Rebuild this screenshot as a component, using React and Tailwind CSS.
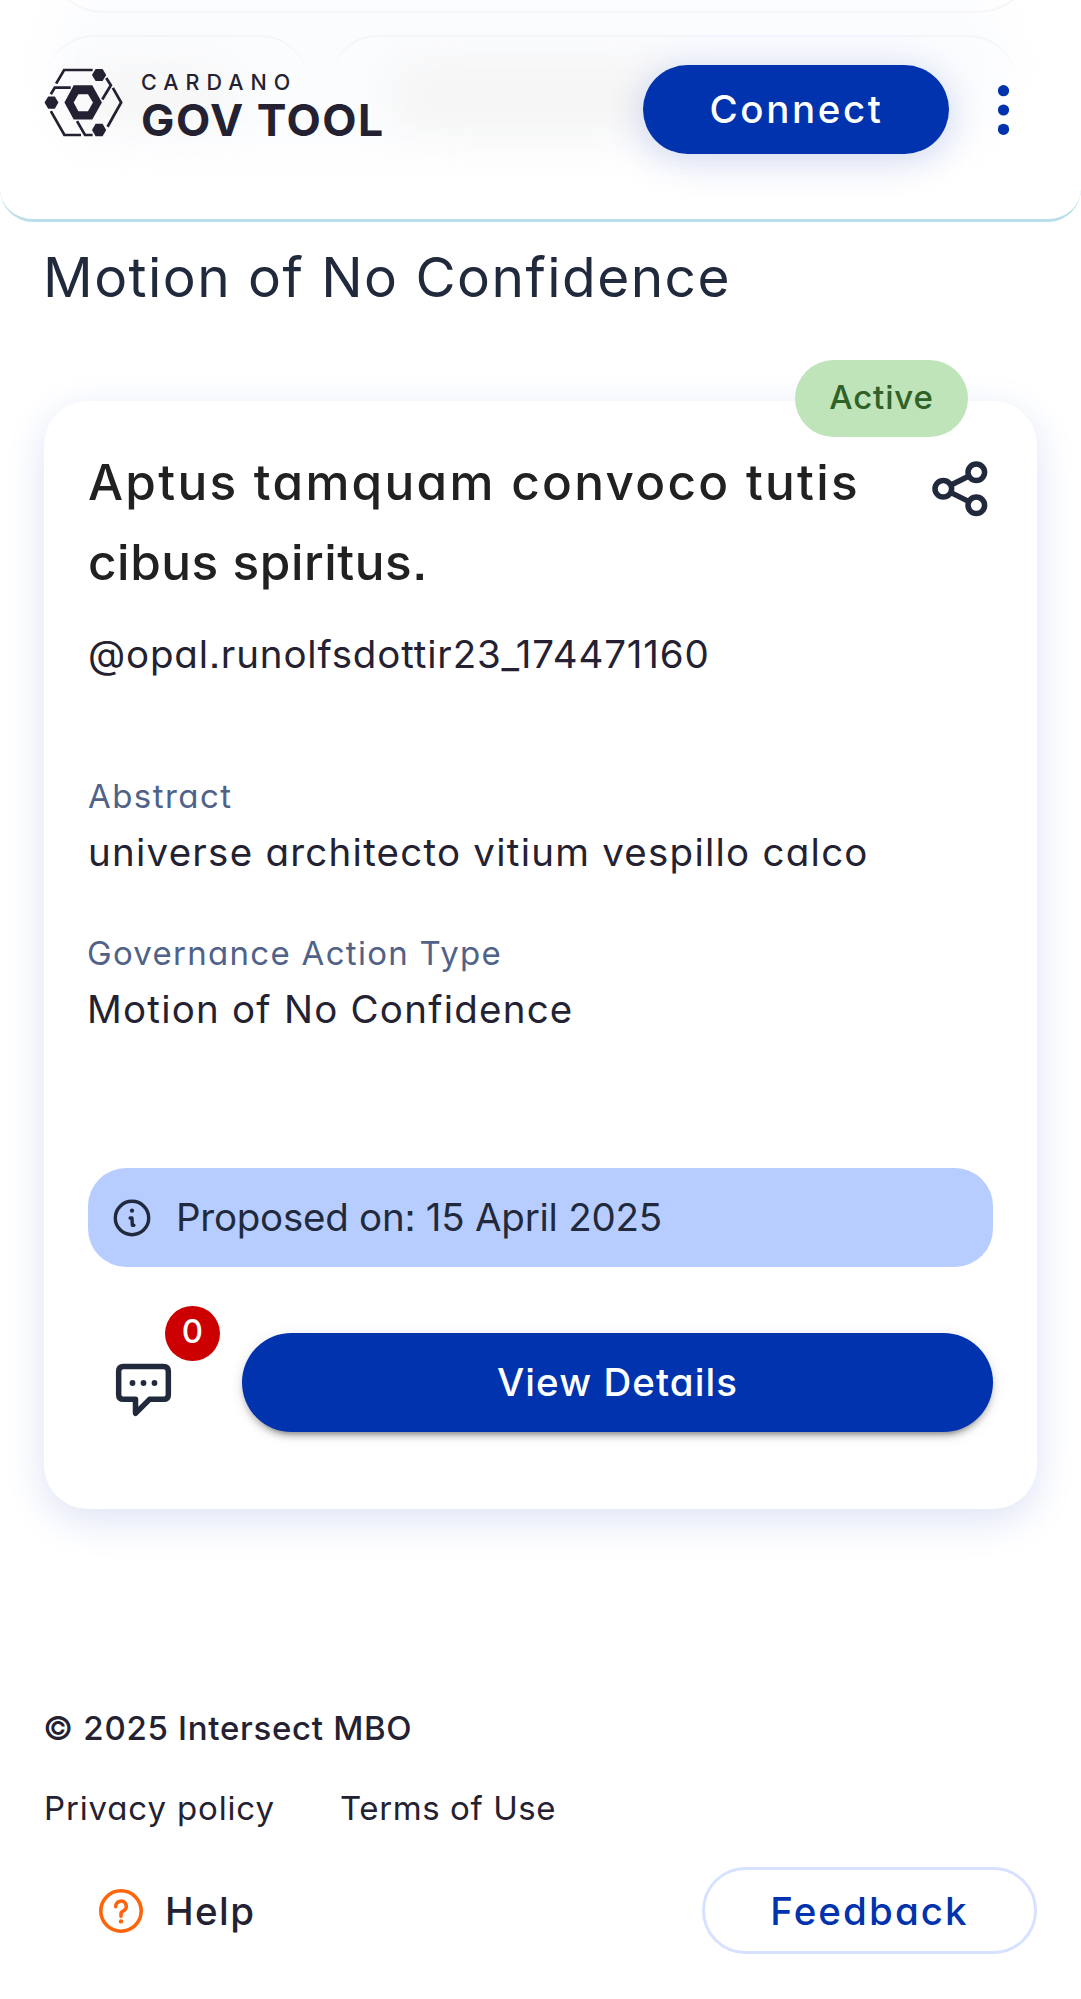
function LogoMark() {
  return (
    <svg viewBox="42 54 237 208" className="h-[69px] w-[79px] shrink-0" fill="none" stroke="#242232" strokeWidth="8.2">
      <path d="M78 101 102 60H188M62 133 74 113H122M229 84 243 106 217 149M249 114 274 158 233 231M62 184 103 256H153M141 214 165 256H188" />
      <g fill="#242232" stroke="none">
        <path d="M186 75 197 57H218L229 75 218 93H197Z" />
        <path d="M43 158 54 140H74L85 158 74 177H54Z" />
        <path d="M186 241 197 222H218L229 241 218 260H197Z" />
        <path fillRule="evenodd" d="M103 158 131 106H187L216 158 187 209H131ZM131 158 145 133H174L189 158 174 184H145Z" />
      </g>
    </svg>
  );
}

function Header() {
  return (
    <header className="relative flex h-[222px] items-start overflow-hidden rounded-b-[33px] border-b-3 border-[#b9dfea] bg-white pl-[44px] pr-[72px]">
      <div className="absolute left-[50px] top-[-20px] h-[170px] w-[960px] rounded-[70px] bg-[#fbfcfe] blur-[22px]" />
      <div className="absolute left-[75px] top-[65px] h-[60px] w-[160px] rounded-full bg-[#f6f6f6] blur-[20px]" />
      <div className="absolute left-[390px] top-[60px] h-[72px] w-[290px] rounded-full bg-[#f5f5f5] blur-[22px]" />
      <div className="absolute left-[44px] top-[-110px] h-[123px] w-[993px] rounded-[60px] border-2 border-[#f6f6f8]" />
      <div className="absolute left-[44px] top-[35px] h-[100px] w-[266px] rounded-[50px] border-2 border-[#f4f5fb] [mask-image:linear-gradient(black_5%,transparent_35%)]" />
      <div className="absolute left-[328px] top-[35px] h-[100px] w-[690px] rounded-[50px] border-2 border-[#f4f5fb] [mask-image:linear-gradient(black_5%,transparent_35%)]" />
      <div className="relative flex pt-[68px]">
        <LogoMark />
        <div className="ml-[18px] flex flex-col gap-[5px] whitespace-nowrap pt-[3px] text-[#242232]">
          <span className="text-[21.5px]/[22px] font-medium tracking-[7px]">CARDANO</span>
          <span className="text-[44.5px]/[44px] font-bold tracking-[1.5px]">GOV TOOL</span>
        </div>
      </div>
      <button className="relative ml-auto mt-[65px] h-[89px] w-[306px] rounded-full bg-[#0033ad] pl-[1px] text-[38.5px] font-medium tracking-[2.6px] text-white shadow-[0_5px_38px_rgba(0,51,173,0.2)]">
        Connect
      </button>
      <svg viewBox="0 0 11 50" className="relative ml-[49px] mt-[84.5px] h-[50px] w-[11px]" fill="#0033ad">
        <circle cx="5.5" cy="5.7" r="5.6" />
        <circle cx="5.5" cy="25" r="5.6" />
        <circle cx="5.5" cy="44.3" r="5.6" />
      </svg>
    </header>
  );
}

function ShareIcon() {
  return (
    <svg viewBox="0 0 56 56" className="mt-[18px] h-[56px] w-[56px] shrink-0" fill="none" stroke="#212a3d" strokeWidth="5.5">
      <circle cx="11.3" cy="27.8" r="8.3" />
      <circle cx="44.3" cy="11.3" r="8.3" />
      <circle cx="44.3" cy="44.3" r="8.3" />
      <path d="M19 24 36.5 15.2M19 31.6 36.5 40.4" />
    </svg>
  );
}

function InfoIcon() {
  return (
    <svg viewBox="-20 -20 40 40" className="h-[40px] w-[40px] shrink-0" fill="none" stroke="#212a3d" strokeWidth="3.4" strokeLinecap="round" strokeLinejoin="round">
      <circle r="16.7" />
      <path d="M-1.9 0H0L.3 7.2H1.9" />
      <circle cy="-7.3" r="2.1" fill="#212a3d" stroke="none" />
    </svg>
  );
}

function HelpIcon() {
  return (
    <svg viewBox="-23 -23 46 46" className="h-[46px] w-[46px] shrink-0" fill="none" stroke="#ff640a" strokeWidth="3.6" strokeLinecap="round" strokeLinejoin="round">
      <circle r="20.2" />
      <path d="M-5.3-4.4A5.3 5.3 0 1 1 2.2.2Q0 1.2 0 3V5.2" />
      <circle cy="10.4" r="2.2" fill="#ff640a" stroke="none" />
    </svg>
  );
}

function CommentIcon() {
  return (
    <svg viewBox="44 218 170 162" className="ml-[27px] mt-[30px] h-[54px] w-[57px]" fill="none" stroke="#212a3d" strokeWidth="16.5" strokeLinejoin="round">
      <path d="M69 228.5H189Q203.5 228.5 203.5 243V313Q203.5 327 189 327H147L105 369V327H69Q54.5 327 54.5 313V243Q54.5 228.5 69 228.5Z" />
      <g fill="#212a3d" stroke="none">
        <circle cx="96" cy="278" r="8.7" />
        <circle cx="129" cy="278" r="8.7" />
        <circle cx="162" cy="278" r="8.7" />
      </g>
    </svg>
  );
}

function ActionCard() {
  return (
    <section className="relative mx-[44px] mt-[90px] flex h-[1108px] flex-col rounded-[44px] bg-white px-[44px] pt-[42px] shadow-[0_11px_41px_#dde3f5]">
      <div className="absolute right-[69px] top-[-41.5px] flex h-[77.5px] w-[173px] items-center justify-center rounded-full bg-[#c0e4ba] pb-px text-[33px] font-medium tracking-[0.87px] text-[#306126]">
        Active
      </div>
      <div className="flex justify-between pr-[5px]">
        <h2 className="flex flex-col whitespace-nowrap text-[49.5px]/[79.5px] font-medium text-[#212121]">
          <span className="tracking-[2.28px]">Aptus tamquam convoco tutis</span>
          <span className="tracking-[0.55px]">cibus spiritus.</span>
        </h2>
        <ShareIcon />
      </div>
      <p className="mt-[23px] whitespace-nowrap text-[38.5px]/[58px] tracking-[0.84px]">@opal.runolfsdottir23_174471160</p>

      <p className="mt-[91px] text-[33px]/[44px] tracking-[1.44px] text-[#506288]">Abstract</p>
      <p className="mt-[5px] whitespace-nowrap text-[38.5px]/[58px] tracking-[1.24px]">universe architecto vitium vespillo calco</p>
      <p className="-ml-px mt-[50px] text-[33px]/[44px] tracking-[1.29px] text-[#506288]">Governance Action Type</p>
      <p className="-ml-px mt-[5px] text-[38.5px]/[58px] tracking-[1.23px]">Motion of No Confidence</p>

      <div className="mt-[129.5px] flex h-[99px] shrink-0 items-center gap-[24px] rounded-[38px] bg-[#b8cdff] pl-[24px] pt-px text-[38.5px] tracking-[-0.25px] text-[#212a3d]">
        <InfoIcon />
        <span>Proposed on: 15 April 2025</span>
      </div>

      <div className="mt-[66px] flex h-[99px]">
        <div className="relative w-[154px] shrink-0">
          <CommentIcon />
          <span className="absolute left-[77px] top-[-27px] flex h-[55px] w-[55px] items-center justify-center rounded-full bg-[#cc0000] pb-[2px] text-[33px] font-medium text-white">
            0
          </span>
        </div>
        <button className="grow rounded-full bg-[#0033ad] pt-[2px] text-[38.5px] font-medium tracking-[1.07px] text-white shadow-[0_8px_3px_-5.5px_rgba(0,0,0,0.2),0_5.5px_5.5px_rgba(0,0,0,0.14),0_3px_14px_rgba(0,0,0,0.12)]">
          View Details
        </button>
      </div>
    </section>
  );
}

function Footer() {
  return (
    <footer className="mt-[197px] flex flex-col pl-[44px] pr-[44px] text-[33px]/[44px]">
      <p className="-ml-px font-medium tracking-[0.7px]">© 2025 Intersect MBO</p>
      <nav className="mt-[36px] flex">
        <a className="w-[296px] tracking-[0.85px]">Privacy policy</a>
        <a className="tracking-[0.6px]">Terms of Use</a>
      </nav>
      <div className="mt-[37px] flex h-[87px] items-center justify-between text-[38.5px] font-medium">
        <div className="flex items-center gap-[21px] pl-[54px] tracking-[1.4px]">
          <HelpIcon />
          <span>Help</span>
        </div>
        <button className="h-[87px] w-[335px] rounded-full border-3 border-[#d6e2ff] tracking-[2.1px] text-[#0033ad]">
          Feedback
        </button>
      </div>
    </footer>
  );
}

export default function App() {
  return (
    <div className="min-h-[1999px] w-[1081px] overflow-hidden bg-white font-['Inter',sans-serif] text-[#242232] [font-feature-settings:'cv11','ss07','ss03']">
      <Header />
      <h1 className="ml-[43px] mt-[22px] text-[55px]/[67px] font-normal tracking-[1.45px] text-[#212a3d]">Motion of No Confidence</h1>
      <ActionCard />
      <Footer />
    </div>
  );
}
